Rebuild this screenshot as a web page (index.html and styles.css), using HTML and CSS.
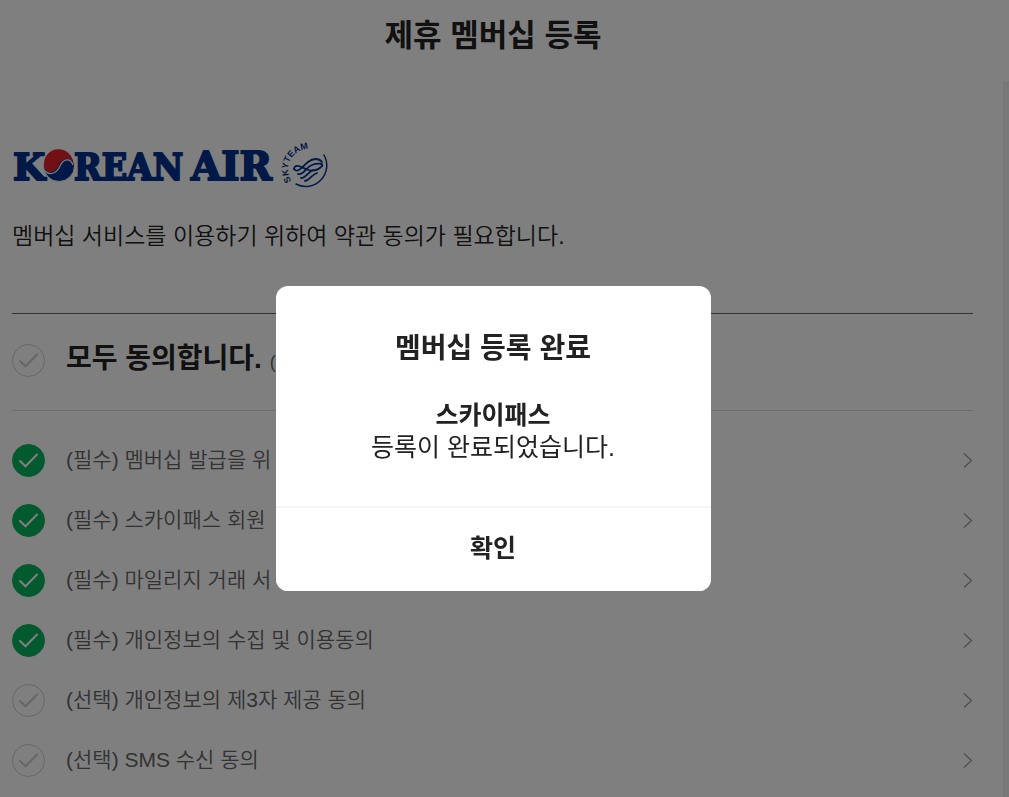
FILE: index.html
```html
<!DOCTYPE html>
<html lang="ko">
<head>
  <meta charset="UTF-8">
  <meta name="viewport" content="width=device-width, initial-scale=1.0">
  <title>제휴 멤버십 등록</title>
  <link rel="stylesheet" href="styles.css">
</head>
<body>

  <svg class="sprite" aria-hidden="true">
    <symbol id="icon-check" viewBox="0 0 33 33">
      <path d="M8 17 L13.5 22.3 L25 10.5" fill="none" stroke="currentColor" stroke-width="2" stroke-linecap="round"/>
    </symbol>
    <symbol id="icon-arrow" viewBox="0 0 10 16">
      <path d="M1 1.5 L8.5 8.5 L1 15.5" fill="none" stroke="currentColor" stroke-width="1.2"/>
    </symbol>
  </svg>

  <header class="header">
    <h1>제휴 멤버십 등록</h1>
  </header>

  <main class="content">
    <svg class="logo" width="320" height="50" viewBox="0 0 320 50" role="img" aria-label="KOREAN AIR SKYTEAM">
      <g class="logo-text">
        <text x="1" y="39">K</text>
        <text class="narrow" x="62" y="39">REAN</text>
        <text class="air" x="179" y="39">AIR</text>
      </g>
      <circle cx="47" cy="25" r="15.500" fill="#04308c" stroke="#fff" stroke-width="1"/>
      <path d="M34 30 A14.500 14.500 0 1 1 61 23 C58 15 50 17 47 24 C44 31 36 33 34 29 Z" fill="#e4202c"/>
      <path d="M33 30 C38 35 45 32 48 25 C51 18 58 16 61 24" fill="none" stroke="#fff" stroke-width="1.200"/>
      <path id="sky-arc" d="M279.500 40 A17.500 17.500 0 0 1 314 17" fill="none"/>
      <text class="sky-text"><textPath href="#sky-arc">SKYTEAM</textPath></text>
      <g fill="none" stroke="#04308c" stroke-linecap="round">
        <path d="M312 14 A21 21 0 0 1 284 43" stroke-width="1.500"/>
        <path d="M282 28 C286 33 291 25 296 21 C301 17 307 17 310 21" stroke-width="1.800"/>
        <path d="M282 28 C283 22 289 26 294 28 C300 31 306 29 310 25" stroke-width="1.800"/>
        <path d="M286 33 C292 34 294 26 300 24 C305 22 312 22 310 25" stroke-width="1.800"/>
        <path d="M289 37 C294 37 296 31 301 29" stroke-width="1.800"/>
        <path d="M293 40 C298 39 299 34 305 32" stroke-width="1.800"/>
      </g>
    </svg>

    <p class="intro">멤버십 서비스를 이용하기 위하여 약관 동의가 필요합니다.</p>

    <div class="agree-all">
      <span class="check">
        <input type="checkbox" id="agree-all">
        <svg><use href="#icon-check"/></svg>
      </span>
      <label for="agree-all">모두 동의합니다. <small>(선택 포함)</small></label>
    </div>

    <ul class="terms">
      <li>
        <span class="check">
          <input type="checkbox" id="term-1" checked>
          <svg><use href="#icon-check"/></svg>
        </span>
        <label for="term-1">(필수) 멤버십 발급을 위</label>
        <a href="#" aria-label="약관 보기"><svg><use href="#icon-arrow"/></svg></a>
      </li>
      <li>
        <span class="check">
          <input type="checkbox" id="term-2" checked>
          <svg><use href="#icon-check"/></svg>
        </span>
        <label for="term-2">(필수) 스카이패스 회원</label>
        <a href="#" aria-label="약관 보기"><svg><use href="#icon-arrow"/></svg></a>
      </li>
      <li>
        <span class="check">
          <input type="checkbox" id="term-3" checked>
          <svg><use href="#icon-check"/></svg>
        </span>
        <label for="term-3">(필수) 마일리지 거래 서</label>
        <a href="#" aria-label="약관 보기"><svg><use href="#icon-arrow"/></svg></a>
      </li>
      <li>
        <span class="check">
          <input type="checkbox" id="term-4" checked>
          <svg><use href="#icon-check"/></svg>
        </span>
        <label for="term-4">(필수) 개인정보의 수집 및 이용동의</label>
        <a href="#" aria-label="약관 보기"><svg><use href="#icon-arrow"/></svg></a>
      </li>
      <li>
        <span class="check">
          <input type="checkbox" id="term-5">
          <svg><use href="#icon-check"/></svg>
        </span>
        <label for="term-5">(선택) 개인정보의 제3자 제공 동의</label>
        <a href="#" aria-label="약관 보기"><svg><use href="#icon-arrow"/></svg></a>
      </li>
      <li>
        <span class="check">
          <input type="checkbox" id="term-6">
          <svg><use href="#icon-check"/></svg>
        </span>
        <label for="term-6">(선택) SMS 수신 동의</label>
        <a href="#" aria-label="약관 보기"><svg><use href="#icon-arrow"/></svg></a>
      </li>
    </ul>
  </main>

  <div class="overlay">
    <div class="modal" role="dialog" aria-modal="true" aria-labelledby="modal-title">
      <div class="modal-body">
        <h2 id="modal-title">멤버십 등록 완료</h2>
        <p><strong>스카이패스</strong><br>등록이 완료되었습니다.</p>
      </div>
      <button type="button">확인</button>
    </div>
  </div>

</body>
</html>
```
FILE: styles.css
```css
* {
  box-sizing: border-box;
  margin: 0;
  padding: 0;
}

body {
  display: flex;
  flex-direction: column;
  height: 100vh;
  overflow: hidden;
  background: #fff;
  color: #222;
  font-family: "Liberation Sans", "Noto Sans CJK KR", sans-serif;
}

.sprite {
  position: absolute;
  width: 0;
  height: 0;
}

.header {
  flex: none;
  padding: 13px 23px 22px 0;
  text-align: center;
}

.header h1 {
  font-size: 31px;
  line-height: 46px;
}

.content {
  flex: 1;
  min-height: 0;
  overflow: hidden;
  padding: 60px 30px 0 12px;
  border-right: 6px solid #f1f1f1;
}

.logo {
  display: block;
  overflow: visible;
}

.logo-text {
  fill: #04308c;
  stroke: #04308c;
  stroke-width: 2;
  stroke-linejoin: round;
  font-family: "DejaVu Serif", serif;
  font-size: 37px;
  font-weight: bold;
}

.logo-text .narrow {
  font-family: "DejaVu Serif Condensed", "DejaVu Serif", serif;
  font-stretch: condensed;
}

.logo-text .air {
  font-size: 39px;
}

.sky-text {
  fill: #04308c;
  font-size: 9px;
  font-weight: bold;
}

.intro {
  margin-top: 27px;
  padding-bottom: 59px;
  border-bottom: 1px solid #666;
  font-size: 23px;
  font-weight: 350;
  line-height: 36px;
}

.agree-all {
  display: flex;
  align-items: center;
  height: 97px;
  padding-bottom: 4px;
  border-bottom: 1px solid #ddd;
}

.agree-all label {
  font-size: 28px;
  font-weight: bold;
  line-height: 42px;
}

.agree-all small {
  color: #666;
  font-size: 18px;
  font-weight: normal;
}

.check {
  display: grid;
  flex: none;
  width: 33px;
  height: 33px;
  margin-right: 21px;
  color: #ccc;
}

.check input,
.check svg {
  grid-area: 1 / 1;
  width: 33px;
  height: 33px;
}

.check input {
  appearance: none;
  border: 1px solid #ccc;
  border-radius: 50%;
}

.check input:checked {
  border-color: #08b45e;
  background: #08b45e;
}

.check input:checked + svg {
  color: #fff;
}

.check svg {
  pointer-events: none;
}

.terms {
  padding-top: 19px;
  list-style: none;
}

.terms li {
  display: flex;
  align-items: center;
  height: 60px;
}

.terms label {
  flex: 1;
  color: #666;
  font-size: 21px;
  font-weight: 350;
  line-height: 32px;
}

.terms a {
  color: #999;
}

.terms a svg {
  display: block;
  width: 10px;
  height: 16px;
}

.overlay {
  position: fixed;
  inset: 0;
  display: flex;
  align-items: center;
  justify-content: center;
  padding: 80px 23px 0 0;
  background: rgba(0, 0, 0, 0.5);
}

.modal {
  width: 435px;
  border-radius: 12px;
  overflow: hidden;
  background: #fff;
  text-align: center;
}

.modal-body {
  padding: 42px 20px 43px;
  border-bottom: 2px solid #f5f5f5;
}

.modal h2 {
  margin-bottom: 30px;
  font-size: 28px;
  line-height: 41px;
}

.modal p {
  font-size: 25px;
  line-height: 32px;
}

.modal button {
  display: block;
  width: 100%;
  height: 83px;
  padding-bottom: 7px;
  border: 0;
  background: #fff;
  color: #222;
  font-family: inherit;
  font-size: 25px;
  font-weight: bold;
  cursor: pointer;
}
```
